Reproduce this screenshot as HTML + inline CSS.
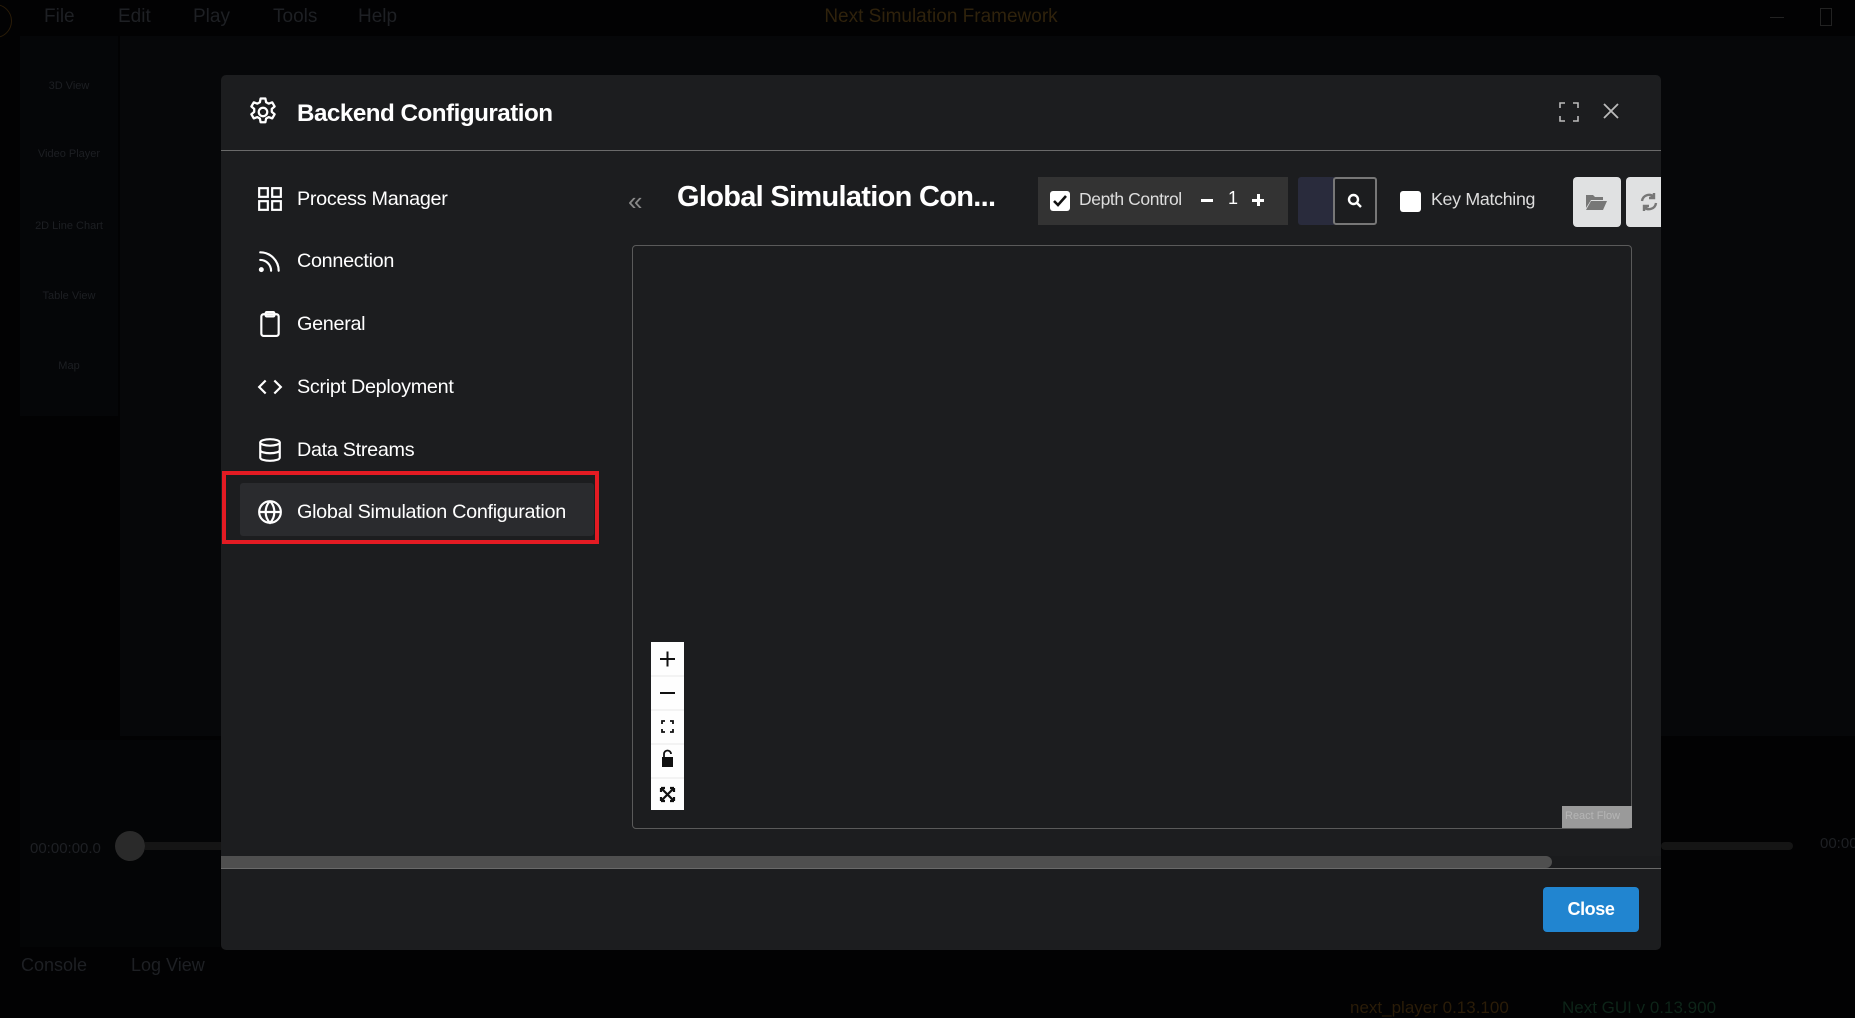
<!DOCTYPE html>
<html><head><meta charset="utf-8"><style>
*{box-sizing:border-box;margin:0;padding:0}
body{width:1855px;height:1008px;background:#020203;position:relative;overflow:hidden;font-family:"Liberation Sans",sans-serif;color:#fff}
.a{position:absolute}
.menu span{position:absolute;top:6px;font-size:19px;color:#1e2024}
.side{left:20px;top:36px;width:98px;height:380px;background:#050608}
.sl{position:absolute;width:98px;text-align:center;font-size:11px;color:#1d1f23}
.modal{left:221px;top:75px;width:1440px;height:875px;background:#1c1d1f;border-radius:5px;overflow:hidden}
.nav{position:absolute;left:36px;font-size:19.8px;color:#fff;font-family:"Liberation Sans",sans-serif;letter-spacing:-0.3px}
.nav svg{position:absolute;left:0;top:-2px}
.nav span{position:absolute;left:40px;top:0;white-space:nowrap}
</style></head><body>
<div class="a" style="left:-22px;top:4px;width:34px;height:34px;border:1px solid #2a1c08;border-radius:50%"></div>
<div class="menu"><span style="left:44px">File</span><span style="left:118px">Edit</span><span style="left:193px">Play</span><span style="left:273px">Tools</span><span style="left:358px">Help</span></div>
<div class="a" style="left:0;top:6px;width:1855px;text-align:center;font-size:19px;color:#2f220c;padding-left:27px">Next Simulation Framework</div>
<div class="a" style="left:1770px;top:17px;width:14px;height:1px;background:#222"></div>
<div class="a" style="left:1820px;top:8px;width:12px;height:18px;border:1px solid #222"></div>
<div class="a" style="left:120px;top:36px;width:1735px;height:700px;background:#060709"></div>
<div class="a side"></div>
<div class="a" style="left:20px;top:740px;width:200px;height:207px;background:#040506"></div>
<div class="sl" style="left:20px;top:80px">3D View</div>
<div class="sl" style="left:20px;top:148px">Video Player</div>
<div class="sl" style="left:20px;top:220px">2D Line Chart</div>
<div class="sl" style="left:20px;top:290px">Table View</div>
<div class="sl" style="left:20px;top:360px">Map</div>
<div class="a" style="left:30px;top:840px;font-size:15px;color:#1e2024">00:00:00.0</div>
<div class="a" style="left:115px;top:831px;width:30px;height:30px;border-radius:50%;background:#2a2a2a"></div>
<div class="a" style="left:145px;top:842px;width:80px;height:8px;background:#151515"></div>
<div class="a" style="left:1661px;top:842px;width:132px;height:8px;background:#151515;border-radius:4px"></div>
<div class="a" style="left:1820px;top:835px;font-size:15px;color:#1e2024">00:00</div>
<div class="a" style="left:21px;top:955px;font-size:18px;color:#1e2024">Console</div>
<div class="a" style="left:131px;top:955px;font-size:18px;color:#1e2024">Log View</div>
<div class="a" style="left:1350px;top:998px;font-size:17px;color:#2a1c08">next_player 0.13.100</div>
<div class="a" style="left:1562px;top:998px;font-size:17px;color:#0d2418">Next GUI v 0.13.900</div>

<div class="a modal">
  <svg class="a" style="left:25px;top:20px" width="34" height="34" viewBox="0 0 24 24" fill="none" stroke="#fff" stroke-width="1.6" stroke-linejoin="round"><path d="M10.3 2.5h3.4l.5 2.6 1.8 1 2.5-.9 1.7 2.9-2 1.7v2.1l2 1.7-1.7 2.9-2.5-.9-1.8 1-.5 2.6h-3.4l-.5-2.6-1.8-1-2.5.9-1.7-2.9 2-1.7v-2.1l-2-1.7 1.7-2.9 2.5.9 1.8-1z"/><circle cx="12" cy="12" r="3"/></svg>
  <div class="a" style="left:76px;top:25px;font-size:24.2px;font-weight:bold;letter-spacing:-0.5px">Backend Configuration</div>
  <svg class="a" style="left:1338px;top:27px" width="20" height="20" viewBox="0 0 20 20" fill="none" stroke="#bbb" stroke-width="1.6"><path d="M1 6V1h5M14 1h5v5M19 14v5h-5M6 19H1v-5"/></svg>
  <svg class="a" style="left:1381px;top:27px" width="18" height="18" viewBox="0 0 18 18" stroke="#bbb" stroke-width="1.8"><path d="M2 2l14 14M16 2L2 16"/></svg>
  <div class="a" style="left:0;top:75px;width:1440px;height:1px;background:#6a6a6a"></div>

  <div class="nav" style="top:113px"><svg width="26" height="26" viewBox="0 0 24 24" fill="none" stroke="#fff" stroke-width="2"><rect x="2" y="2" width="8" height="8"/><rect x="14" y="2" width="8" height="8"/><rect x="2" y="14" width="8" height="8"/><rect x="14" y="14" width="8" height="8"/></svg><span>Process Manager</span></div>
  <div class="nav" style="top:175px"><svg width="26" height="26" viewBox="0 0 24 24" fill="none" stroke="#fff" stroke-width="2" stroke-linecap="round"><path d="M3 4a17 17 0 0 1 17 17M3 11a10 10 0 0 1 10 10"/><circle cx="4" cy="20" r="1.3" fill="#fff"/></svg><span>Connection</span></div>
  <div class="nav" style="top:238px"><svg width="26" height="26" viewBox="0 0 24 24" fill="none" stroke="#fff" stroke-width="2"><rect x="4" y="3" width="16" height="20" rx="2"/><rect x="8" y="1" width="8" height="4" rx="1"/></svg><span>General</span></div>
  <div class="nav" style="top:301px"><svg width="26" height="26" viewBox="0 0 24 24" fill="none" stroke="#fff" stroke-width="2"><path d="M8 6l-6 6 6 6M16 6l6 6-6 6"/></svg><span>Script Deployment</span></div>
  <div class="nav" style="top:364px"><svg width="26" height="26" viewBox="0 0 24 24" fill="none" stroke="#fff" stroke-width="2"><ellipse cx="12" cy="5" rx="9" ry="3"/><path d="M3 5v14c0 1.7 4 3 9 3s9-1.3 9-3V5M3 12c0 1.7 4 3 9 3s9-1.3 9-3"/></svg><span>Data Streams</span></div>
  <div class="a" style="left:1px;top:396px;width:377px;height:73px;border:4px solid #e31b23"></div>
  <div class="a" style="left:19px;top:408px;width:354px;height:53px;background:#2a2b2e;border-radius:3px"></div>
  <div class="nav" style="top:426px"><svg width="26" height="26" viewBox="0 0 24 24" fill="none" stroke="#fff" stroke-width="2"><circle cx="12" cy="12" r="10"/><path d="M2 12h20M12 2c-3 3-4 6.5-4 10s1 7 4 10c3-3 4-6.5 4-10s-1-7-4-10"/></svg><span>Global Simulation Configuration</span></div>

  <div class="a" style="left:407px;top:111px;font-size:26px;color:#888">«</div>
  <div class="a" style="left:456px;top:106px;font-size:29px;font-weight:bold;letter-spacing:-0.7px">Global Simulation Con...</div>
  <div class="a" style="left:817px;top:102px;width:250px;height:48px;background:#333"></div>
  <div class="a" style="left:829px;top:116px;width:20px;height:20px;background:#fff;border-radius:3px"><svg width="20" height="20" viewBox="0 0 20 20"><path d="M4 10l4 4 8-9" fill="none" stroke="#111" stroke-width="2.6"/></svg></div>
  <div class="a" style="left:858px;top:114px;font-size:17.5px;color:#ddd;letter-spacing:-0.4px">Depth Control</div>
  <div class="a" style="left:980px;top:124px;width:12px;height:3px;background:#fff"></div>
  <div class="a" style="left:1007px;top:113px;font-size:18px">1</div>
  <div class="a" style="left:1031px;top:124px;width:12px;height:3px;background:#fff"></div>
  <div class="a" style="left:1036px;top:119px;width:3px;height:12px;background:#fff"></div>
  <div class="a" style="left:1077px;top:102px;width:36px;height:48px;background:#292b3c;border-radius:3px 0 0 3px"></div>
  <div class="a" style="left:1112px;top:102px;width:44px;height:48px;border:2px solid #777;border-radius:3px;background:#1c1d1f"><svg style="position:absolute;left:12px;top:14px" width="16" height="16" viewBox="0 0 16 16" fill="none" stroke="#fff" stroke-width="2.4"><circle cx="6.5" cy="6.5" r="4.5"/><path d="M10 10l4 4"/></svg></div>
  <div class="a" style="left:1179px;top:116px;width:21px;height:21px;background:#fff;border-radius:3px"></div>
  <div class="a" style="left:1210px;top:114px;font-size:17.8px;color:#ddd;letter-spacing:-0.3px">Key Matching</div>
  <div class="a" style="left:1352px;top:102px;width:48px;height:50px;background:#e0e1e2;border-radius:4px"><svg style="position:absolute;left:13px;top:17px" width="21" height="16" viewBox="0 0 21 16" fill="#777"><path d="M0 1h7l2 2h8v3H5L0 14zM5 7h16l-4 9H0z"/></svg></div>
  <div class="a" style="left:1405px;top:102px;width:40px;height:50px;background:#e0e1e2;border-radius:4px 0 0 4px"><svg style="position:absolute;left:13px;top:15px" width="20" height="20" viewBox="0 0 20 20" fill="none" stroke="#777" stroke-width="2.4"><path d="M3 9a7 7 0 0 1 12-4M17 11a7 7 0 0 1-12 4"/><path d="M15 1v5h-5M5 19v-5h5" fill="#777"/></svg></div>

  <div class="a" style="left:411px;top:170px;width:1000px;height:584px;border:1px solid #5a5a5a;border-radius:4px"></div>
  <div class="a" style="left:430px;top:567px;width:33px;height:168px;background:#fefefe">
    <svg width="33" height="168" viewBox="0 0 33 168" stroke="#111" fill="none" stroke-width="2"><path d="M9 17h15M16.5 9.5v15"/><path d="M0 34h33M0 68h33M0 102h33M0 136h33" stroke="#e8e8e8" stroke-width="1"/><path d="M9 51h15"/><path d="M11 82v-3h3M19 79h3v3M22 87v3h-3M14 90h-3v-3" stroke-width="1.8"/><rect x="11" y="115" width="11" height="10" fill="#111" stroke="none"/><path d="M13 115v-3a3.5 3.5 0 0 1 7 0" stroke-width="1.8"/><path d="M10 146l13 13M23 146l-13 13M10 146v4M10 146h4M23 146h-4M23 146v4M10 159v-4M10 159h4M23 159h-4M23 159v-4" stroke-width="2.2"/></svg>
  </div>
  <div class="a" style="left:1341px;top:731px;width:70px;height:22px;background:#9a9a9a;font-size:11px;color:#b5b5b5;padding:4px 3px">React Flow</div>

  <div class="a" style="left:0;top:781px;width:1440px;height:12px;background:#1a1b1d"></div>
  <div class="a" style="left:0;top:781px;width:1331px;height:12px;background:#4f4f4f;border-radius:0 6px 6px 0"></div>
  <div class="a" style="left:0;top:793px;width:1440px;height:1px;background:#6a6a6a"></div>
  <div class="a" style="left:1322px;top:812px;width:96px;height:45px;background:#2185d0;border-radius:4px;font-size:18px;font-weight:bold;text-align:center;line-height:45px;letter-spacing:-0.4px">Close</div>
</div>
</body></html>
